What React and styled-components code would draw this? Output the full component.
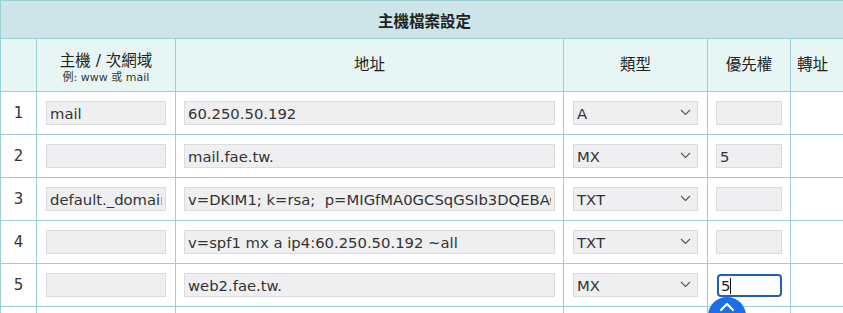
import React from "react";
import styled, { createGlobalStyle } from "styled-components";

const Global = createGlobalStyle`
  html, body { margin: 0; padding: 0; background: #fff; overflow: hidden; }
  body { font-family: "DejaVu Sans", "Noto Sans CJK TC", sans-serif; color: #333; }
`;

const Page = styled.div`
  position: relative;
  width: 843px;
  height: 313px;
  overflow: hidden;
`;

const Table = styled.table`
  border-collapse: collapse;
  table-layout: fixed;
  width: 848px;
  font-size: 15px;
`;

const TitleCell = styled.th`
  height: 37px;
  background: #cde5e9;
  border: 1px solid #9dcfd6;
  font-size: 15.5px;
  font-weight: bold;
  color: #222;
  text-align: center;
  padding: 0;
  font-family: "Noto Sans CJK TC", sans-serif;
`;

const HeadCell = styled.th`
  height: 53px;
  box-sizing: border-box;
  background: #e7f5f5;
  border: 1px solid #9dcfd6;
  font-weight: normal;
  font-size: 15.5px;
  color: #222;
  text-align: center;
  padding: ${(p) => p.$pt ?? 0}px ${(p) => p.$pr ?? 0}px 0 0;
  line-height: 1.3;
  font-family: "DejaVu Sans", "Noto Sans CJK TC", sans-serif;
`;

const SubNote = styled.div`
  font-size: 11px;
  color: #333;
  margin-top: 0;
`;

const Cell = styled.td`
  height: 42px;
  border: 1px solid #9dcfd6;
  padding: 0 ${(p) => p.$px ?? 8}px;
  text-align: ${(p) => (p.$center ? "center" : "left")};
  font-size: 15px;
  color: #333;
`;

const Input = styled.input`
  display: block;
  box-sizing: border-box;
  width: 100%;
  height: 24px;
  margin: 0;
  padding: 0 3px;
  background: #efeff1;
  border: 1px solid #dcdcdf;
  border-radius: 0;
  font-family: "DejaVu Sans", sans-serif;
  font-size: 14.8px;
  color: #333;
  outline: none;
`;

const FocusWrap = styled.div`
  position: relative;
  margin-left: 1px;
`;

const FocusInput = styled(Input)`
  height: 23px;
  border: 2px solid #1c5fbd;
  border-radius: 4px;
  background: #fff;
  padding: 0 2px;
  color: #222;
`;

const Caret = styled.span`
  position: absolute;
  left: 13px;
  top: 4px;
  width: 1px;
  height: 16px;
  background: #111;
`;

const SelectWrap = styled.div`
  position: relative;
`;

const Select = styled.select`
  display: block;
  box-sizing: border-box;
  width: 100%;
  height: 24px;
  margin: 0;
  padding: 0 3px;
  background: #efeff1;
  border: 1px solid #dcdcdf;
  border-radius: 0;
  appearance: none;
  -webkit-appearance: none;
  font-family: "DejaVu Sans", sans-serif;
  font-size: 14.8px;
  color: #333;
  outline: none;
`;

const Chevron = styled.svg`
  position: absolute;
  right: 7px;
  top: 8px;
  width: 11px;
  height: 7px;
  pointer-events: none;
`;

const Fab = styled.div`
  position: absolute;
  left: 708px;
  top: 297px;
  width: 38px;
  height: 38px;
  border-radius: 50%;
  background: #1a6fe6;
  display: flex;
  align-items: flex-start;
  justify-content: center;
`;

const rows = [
  { n: 1, host: "mail", addr: "60.250.50.192", type: "A", pri: "" },
  { n: 2, host: "", addr: "mail.fae.tw.", type: "MX", pri: "5" },
  { n: 3, host: "default._domainkey", addr: "v=DKIM1; k=rsa;  p=MIGfMA0GCSqGSIb3DQEBAQUAA4GNADCBiQKBgQ", type: "TXT", pri: "" },
  { n: 4, host: "", addr: "v=spf1 mx a ip4:60.250.50.192 ~all", type: "TXT", pri: "" },
  { n: 5, host: "", addr: "web2.fae.tw.", type: "MX", pri: "5", focus: true },
];

function TypeSelect({ value }) {
  return (
    <SelectWrap>
      <Select defaultValue={value}>
        <option>A</option>
        <option>MX</option>
        <option>TXT</option>
        <option>CNAME</option>
      </Select>
      <Chevron viewBox="0 0 11 7">
        <path d="M1 1l4.5 4.5L10 1" fill="none" stroke="#555" strokeWidth="1.1" />
      </Chevron>
    </SelectWrap>
  );
}

export default function App() {
  return (
    <Page>
      <Global />
      <Table>
        <colgroup>
          <col style={{ width: 36 }} />
          <col style={{ width: 139 }} />
          <col style={{ width: 388 }} />
          <col style={{ width: 144 }} />
          <col style={{ width: 83 }} />
          <col style={{ width: 58 }} />
        </colgroup>
        <thead>
          <tr>
            <TitleCell colSpan={6}>主機檔案設定</TitleCell>
          </tr>
          <tr>
            <HeadCell />
            <HeadCell $pt={6}>
              主機 / 次網域
              <SubNote>例: www 或 mail</SubNote>
            </HeadCell>
            <HeadCell>地址</HeadCell>
            <HeadCell>類型</HeadCell>
            <HeadCell>優先權</HeadCell>
            <HeadCell $pr={14}>轉址</HeadCell>
          </tr>
        </thead>
        <tbody>
          {rows.map((r) => (
            <tr key={r.n}>
              <Cell $center $px={0}>{r.n}</Cell>
              <Cell $px={9}>
                <Input defaultValue={r.host} />
              </Cell>
              <Cell>
                <Input defaultValue={r.addr} />
              </Cell>
              <Cell $px={9}>
                <TypeSelect value={r.type} />
              </Cell>
              <Cell>
                {r.focus ? (
                  <FocusWrap>
                    <FocusInput defaultValue={r.pri} />
                    <Caret />
                  </FocusWrap>
                ) : (
                  <Input defaultValue={r.pri} />
                )}
              </Cell>
              <Cell />
            </tr>
          ))}
          <tr>
            <Cell />
            <Cell />
            <Cell />
            <Cell />
            <Cell />
            <Cell />
          </tr>
        </tbody>
      </Table>
      <Fab>
        <svg width="18" height="12" viewBox="0 0 18 12" style={{ marginTop: 4 }}>
          <path d="M3 9l6-6 6 6" fill="none" stroke="#fff" strokeWidth="2.2" strokeLinecap="round" strokeLinejoin="round" />
        </svg>
      </Fab>
    </Page>
  );
}
